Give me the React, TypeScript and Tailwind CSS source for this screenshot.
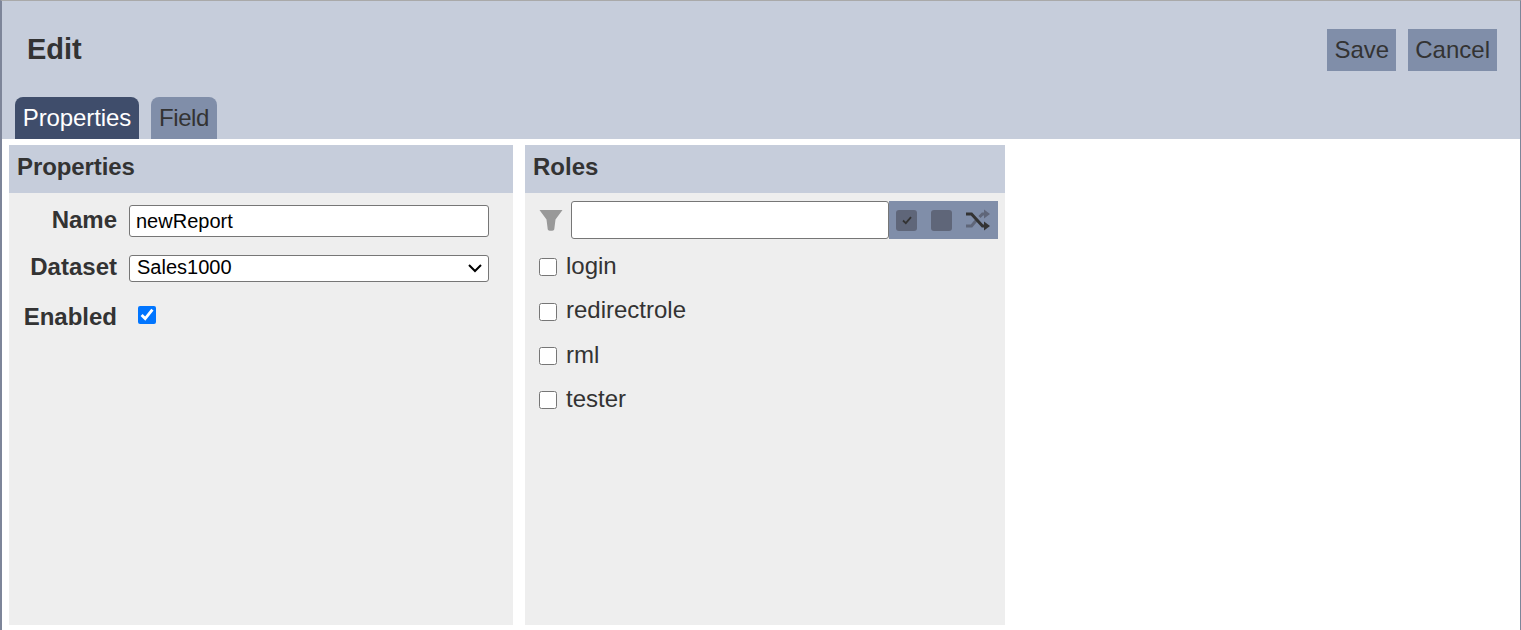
import React from 'react';

const ROLES = ['login', 'redirectrole', 'rml', 'tester'];

const App: React.FC = () => {
  return (
    <div className="h-[630px] overflow-hidden border-t border-t-[#a9a9a9] border-l-2 border-l-[#7d8599] border-r border-r-[#7d8599] bg-white font-['Liberation_Sans',Arial,sans-serif] text-[#333]">
      <div className="h-[138px] bg-[#c6cddb] flex flex-col">
        <div className="h-[96px] flex justify-between pl-[25px] pr-[23px]">
          <h1 className="text-[29px] leading-[33px] font-bold mt-[32px]">Edit</h1>
          <div className="flex gap-3 mt-[28px]">
            <button className="h-[42px] w-[69px] bg-[#808ea9] text-2xl leading-[42px]">Save</button>
            <button className="h-[42px] px-[7px] bg-[#808ea9] text-2xl leading-[42px]">Cancel</button>
          </div>
        </div>
        <div className="flex gap-3 pl-[13px]">
          <div className="h-[42px] w-[124px] rounded-t-lg bg-[#3f4d6b] text-white text-2xl leading-[41px] text-center tracking-[-0.08px]">Properties</div>
          <div className="h-[42px] w-[66px] rounded-t-lg bg-[#808ea9] text-2xl leading-[41px] text-center tracking-[-0.4px]">Field</div>
        </div>
      </div>

      <div className="flex gap-3 pl-[7px] pt-[6px]">
        <section className="w-[504px] h-[480px] bg-[#eeeeee]">
          <h2 className="h-12 px-2 bg-[#c6cddb] text-2xl leading-[44px] font-bold tracking-[-0.1px]">Properties</h2>
          <div className="grid grid-cols-[108px_360px] gap-x-3 pt-3 items-center">
            <label className="text-right text-2xl leading-[30px] font-bold h-8">Name</label>
            <input
              defaultValue="newReport"
              className="w-[360px] h-8 px-[6px] bg-white border border-[#767676] rounded-[3px] text-[20px] text-black"
            />
            <label className="text-right text-2xl leading-[30px] font-bold mt-[15px] h-[32px]">Dataset</label>
            <div className="relative w-[360px] h-[27px] mt-[2px] self-start translate-y-[16px]">
              <select className="appearance-none w-full h-full pl-[7px] pb-[4px] leading-[20px] bg-white border border-[#767676] rounded-[3px] text-[20px] text-black">
                <option>Sales1000</option>
              </select>
              <svg viewBox="0 0 14 9" className="absolute right-[7px] top-[9px] w-[14px] h-[9px] fill-none stroke-black stroke-2 pointer-events-none">
                <path d="M1 1l6 6 6-6" />
              </svg>
            </div>
            <label className="text-right text-2xl leading-[28px] font-bold mt-[19px]">Enabled</label>
            <div className="mt-[19px] pl-[9px] h-[28px] flex items-start pt-[3px]">
              <input type="checkbox" defaultChecked className="w-[18px] h-[18px] m-0" />
            </div>
          </div>
        </section>

        <section className="w-[480px] h-[480px] bg-[#eeeeee]">
          <h2 className="h-12 px-2 bg-[#c6cddb] text-2xl leading-[44px] font-bold">Roles</h2>
          <div className="flex items-center pl-[14px] pt-[8px]">
            <svg viewBox="0 0 24 22" className="w-[24px] h-[22px] mr-[8px] fill-[#999999]">
              <path d="M0.5 1h23l-7 9.500-1.200 9.500c-.1 1-1 1.700-2 1.700h-2.600c-1 0-1.900-.7-2-1.700L7.500 10.500z" />
            </svg>
            <input className="w-[318px] h-[38px] bg-white border border-[#767676] rounded-[3px]" />
            <div className="h-[38px] w-[109px] bg-[#808ea9] flex items-center pl-[7px]">
              <span className="w-[21px] h-[21px] rounded-[3px] bg-[#5f6679] flex items-center justify-center">
                <svg viewBox="0 0 12 12" className="w-3 h-3 fill-none stroke-[#333] stroke-[1.8]">
                  <path d="M2 6.500l2.800 2.600L10 3.200" />
                </svg>
              </span>
              <span className="w-[21px] h-[21px] rounded-[3px] bg-[#5f6679] ml-[14px]" />
              <svg viewBox="0 0 25 22" className="w-[25px] h-[22px] ml-[14px] fill-none stroke-[3]">
                <path d="M0 17h5.500l5.500-6.500M13.500 8l3-3h4" className="stroke-[#5f6679]" />
                <path d="M18 0.500l6 4.500-6 4.500z" className="fill-[#5f6679]" stroke="none" />
                <path d="M0 5h5.500l11 12h4" className="stroke-[#333]" />
                <path d="M18 12.500l6 4.500-6 4.500z" className="fill-[#333]" stroke="none" />
              </svg>
            </div>
          </div>
          <ul className="pl-[14px] pt-[6px]">
            {ROLES.map((role) => (
              <li key={role} className="h-[44.4px] flex items-center gap-[9px] text-2xl">
                <input type="checkbox" className="w-[18px] h-[18px] m-0" />
                <span className="mb-[2.5px]">{role}</span>
              </li>
            ))}
          </ul>
        </section>
      </div>
    </div>
  );
};

export default App;
